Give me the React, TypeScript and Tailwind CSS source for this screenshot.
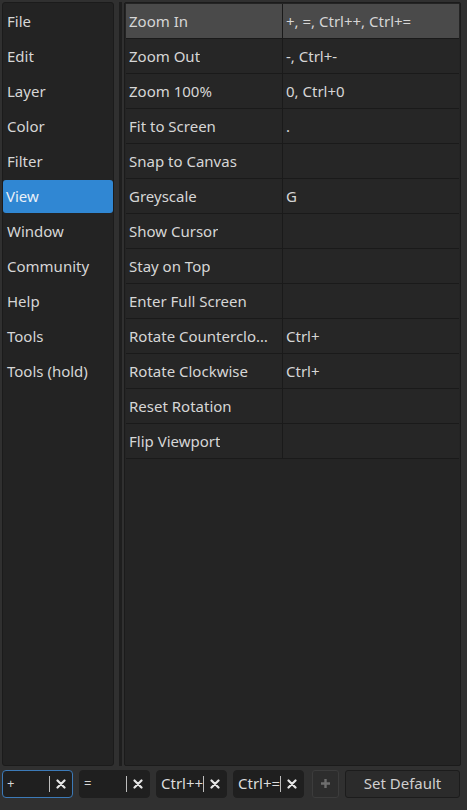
import React from "react";

const categories = [
  "File",
  "Edit",
  "Layer",
  "Color",
  "Filter",
  "View",
  "Window",
  "Community",
  "Help",
  "Tools",
  "Tools (hold)",
];

const rows: [string, string][] = [
  ["Zoom In", "+, =, Ctrl++, Ctrl+="],
  ["Zoom Out", "-, Ctrl+-"],
  ["Zoom 100%", "0, Ctrl+0"],
  ["Fit to Screen", "."],
  ["Snap to Canvas", ""],
  ["Greyscale", "G"],
  ["Show Cursor", ""],
  ["Stay on Top", ""],
  ["Enter Full Screen", ""],
  ["Rotate Counterclockwise", "Ctrl+"],
  ["Rotate Clockwise", "Ctrl+"],
  ["Reset Rotation", ""],
  ["Flip Viewport", ""],
];

const keys = ["+", "=", "Ctrl++", "Ctrl+="];

function XIcon() {
  return (
    <svg width="10" height="10" viewBox="0 0 10 10">
      <path d="M1.5 1.5 L8.5 8.5 M8.5 1.5 L1.5 8.5" stroke="#e6e6e6" strokeWidth="2.2" strokeLinecap="round" />
    </svg>
  );
}

export default function App() {
  return (
    <div
      className="w-[467px] h-[810px] bg-[#303030] flex flex-col text-[15px] text-[#d6d6d6] overflow-hidden"
      style={{ fontFamily: '"Noto Sans", "Open Sans", sans-serif' }}
    >
      <div className="flex h-[766px] pt-[2px] pl-[2px] pr-[6px]">
        <div className="w-[112px] bg-[#232323] border border-[#1b1b1b] rounded-[3px] flex flex-col pt-[1px]">
          {categories.map((c) => (
            <div
              key={c}
              className={
                c === "View"
                  ? "h-[33px] my-[1px] flex items-center px-[3px] rounded-[3px] bg-[#3087d3] text-[#e8f0f8]"
                  : "h-[35px] flex items-center px-[4px]"
              }
            >
              {c}
            </div>
          ))}
        </div>
        <div className="w-[10px] flex justify-center pl-[2px]">
          <div className="w-[3px] h-full bg-[#1e1e1e]" />
        </div>
        <div className="flex-1 bg-[#242424] border border-[#1b1b1b] rounded-[2px] pl-[1px] pt-[1px] pr-[1px]">
          {rows.map(([name, key], i) => (
            <div
              key={name}
              className={
                "h-[35px] flex border-b border-[#1a1a1a] " +
                (i === 0 ? "bg-[#4a4a4a]" : "bg-[#262626]")
              }
            >
              <div className="w-[157px] shrink-0 pl-[3px] pr-[8px] flex items-center border-r border-[#1a1a1a] overflow-hidden">
                <span className="truncate">{name}</span>
              </div>
              <div className="flex-1 px-[3px] flex items-center">{key}</div>
            </div>
          ))}
        </div>
      </div>
      <div className="flex items-center gap-[6px] px-[2px] h-[29px] mt-[3px]">
        {keys.map((k, i) => (
          <div
            key={i}
            className={
              "w-[71px] h-[28px] rounded-[4px] bg-[#1f1f1f] flex items-center pl-[4px] pr-[6px] border " +
              (i === 0 ? "border-[#3c7ab8]" : "border-[#1f1f1f]")
            }
          >
            <span
              className={
                "flex-1 overflow-hidden whitespace-nowrap " +
                (k.length > 1 ? "text-[15px] text-[#dcdcdc]" : "text-[13px]")
              }
            >
              {k}
            </span>
            <span className="w-[1px] h-[16px] bg-[#bdbdbd] mr-[6px]" />
            <XIcon />
          </div>
        ))}
        <div className="ml-[2px] w-[27px] h-[28px] rounded-[3px] bg-[#2d2d2d] border border-[#3c3c3c] flex items-center justify-center">
          <svg width="11" height="11" viewBox="0 0 11 11">
            <path d="M5.5 1 V10 M1 5.5 H10" stroke="#6e6e6e" strokeWidth="2.4" />
          </svg>
        </div>
        <div className="w-[115px] h-[28px] rounded-[3px] bg-[#2b2b2b] border border-[#1c1c1c] flex items-center justify-center text-[#cfcfcf]">
          Set Default
        </div>
      </div>
    </div>
  );
}
